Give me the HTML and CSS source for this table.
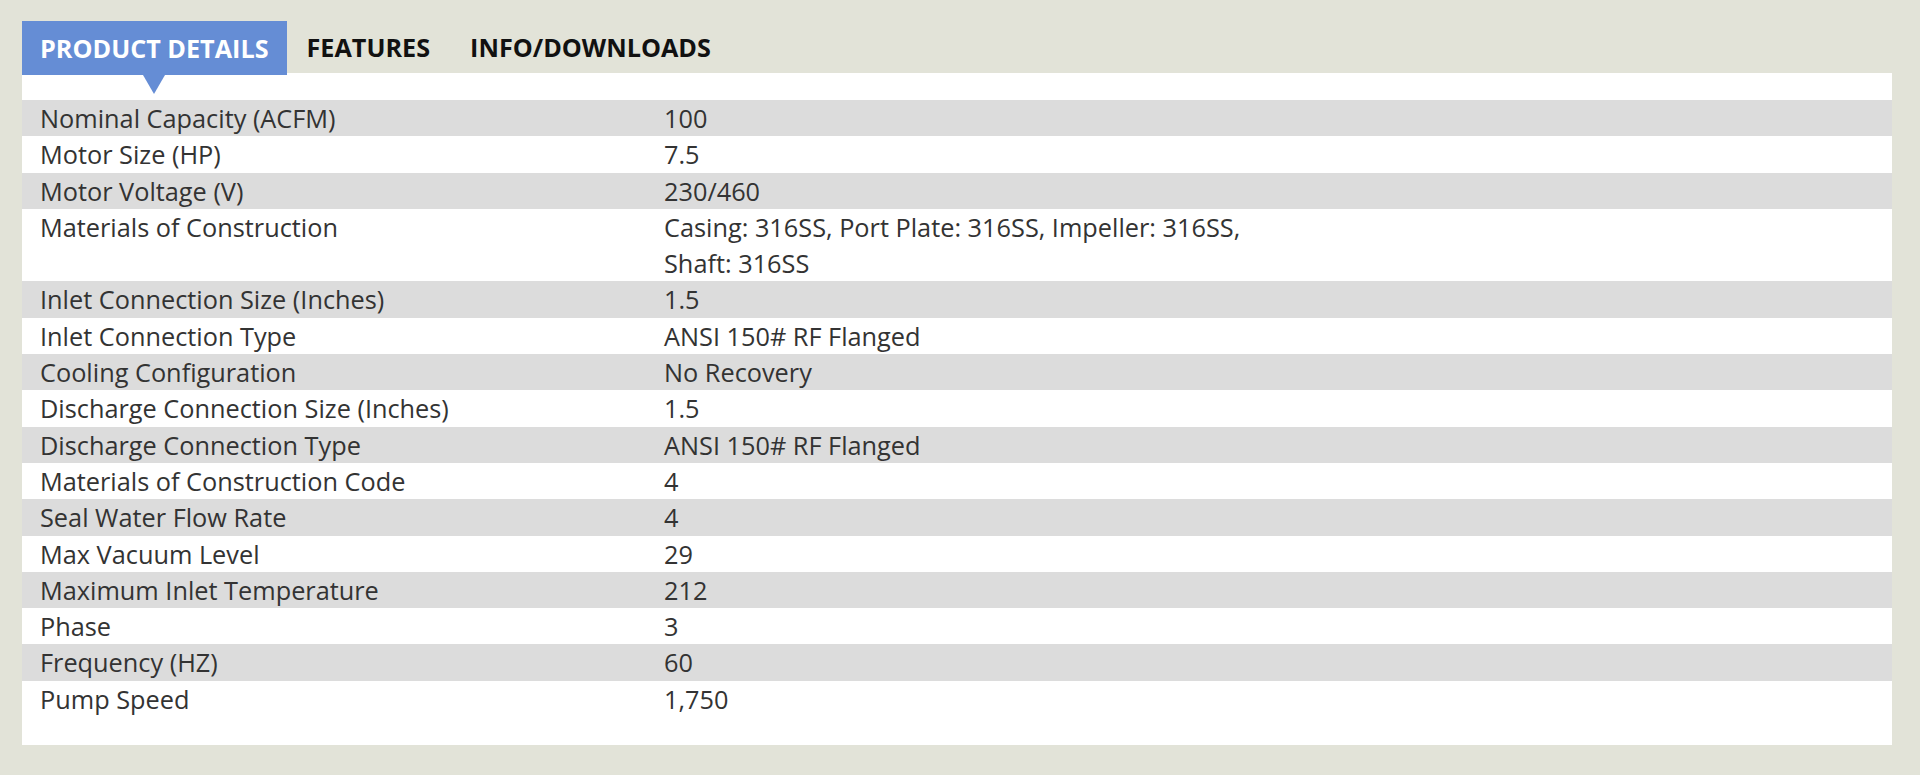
FILE: index.html
```html
<!DOCTYPE html>
<html>
<head>
<meta charset="utf-8">
<link rel="stylesheet" href="styles.css">
</head>
<body>
<div class="wrap">
  <div class="tabs">
    <div class="tab active">PRODUCT DETAILS</div>
    <div class="tab">FEATURES</div>
    <div class="tab">INFO/DOWNLOADS</div>
  </div>
  <div class="panel">
    <table class="specs">
      <tr><td class="k">Nominal Capacity (ACFM)</td><td class="v">100</td></tr>
      <tr><td class="k">Motor Size (HP)</td><td class="v">7.5</td></tr>
      <tr><td class="k">Motor Voltage (V)</td><td class="v">230/460</td></tr>
      <tr><td class="k">Materials of Construction</td><td class="v">Casing: 316SS, Port Plate: 316SS, Impeller: 316SS,<br>Shaft: 316SS</td></tr>
      <tr><td class="k">Inlet Connection Size (Inches)</td><td class="v">1.5</td></tr>
      <tr><td class="k">Inlet Connection Type</td><td class="v">ANSI 150# RF Flanged</td></tr>
      <tr><td class="k">Cooling Configuration</td><td class="v">No Recovery</td></tr>
      <tr><td class="k">Discharge Connection Size (Inches)</td><td class="v">1.5</td></tr>
      <tr><td class="k">Discharge Connection Type</td><td class="v">ANSI 150# RF Flanged</td></tr>
      <tr><td class="k">Materials of Construction Code</td><td class="v">4</td></tr>
      <tr><td class="k">Seal Water Flow Rate</td><td class="v">4</td></tr>
      <tr><td class="k">Max Vacuum Level</td><td class="v">29</td></tr>
      <tr><td class="k">Maximum Inlet Temperature</td><td class="v">212</td></tr>
      <tr><td class="k">Phase</td><td class="v">3</td></tr>
      <tr><td class="k">Frequency (HZ)</td><td class="v">60</td></tr>
      <tr><td class="k">Pump Speed</td><td class="v">1,750</td></tr>
    </table>
  </div>
</div>
</body>
</html>
```

FILE: styles.css
```css
html, body {
  margin: 0;
  padding: 0;
  background: #e2e3d8;
}
body {
  font-family: "Open Sans", "Liberation Sans", sans-serif;
  color: #333;
}
.wrap {
  padding: 21px 28px 30px 22px;
}
.tabs {
  display: flex;
  align-items: stretch;
  height: 52px;
}
.tab {
  display: flex;
  align-items: center;
  padding: 0 20px;
  font-size: 25.2px;
  font-weight: 700;
  color: #111;
}
.tab.active {
  position: relative;
  background: #658dd5;
  color: #fff;
  height: 54px;
  padding: 0 18px;
}
.tab.active::after {
  content: "";
  position: absolute;
  left: 50%;
  top: 100%;
  margin-left: -11px;
  border-left: 11px solid transparent;
  border-right: 11px solid transparent;
  border-top: 19px solid #658dd5;
}
.panel {
  background: #fff;
  padding: 27px 0 28px;
}
.specs {
  width: 100%;
  border-collapse: collapse;
  font-size: 25.3px;
  line-height: 36.3px;
}
.specs tr:nth-child(odd) {
  background: #dcdcdc;
}
.specs td {
  padding: 0;
  vertical-align: top;
}
.specs td.k {
  width: 624px;
  padding-left: 18px;
}
```
